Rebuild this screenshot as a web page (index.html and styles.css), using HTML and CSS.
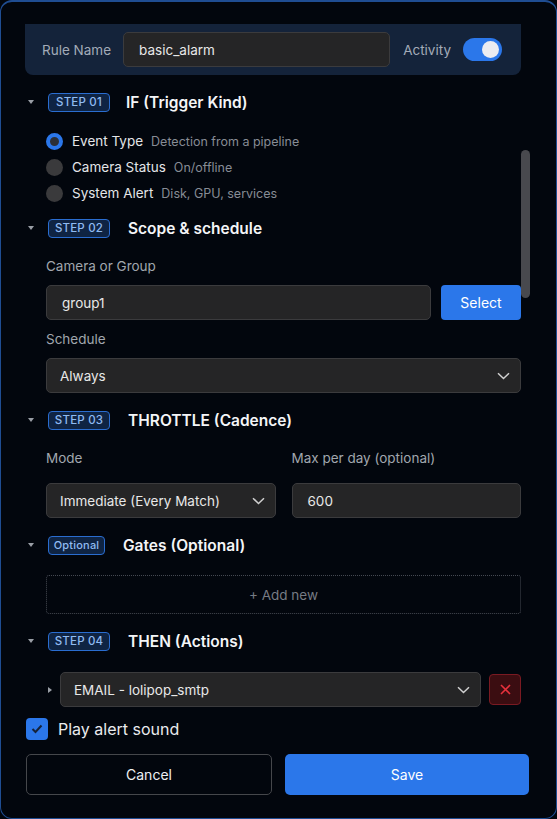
FILE: index.html
```html
<!DOCTYPE html>
<html lang="en">
<head>
<meta charset="UTF-8">
<title>Alarm Rule</title>
<link rel="stylesheet" href="styles.css">
</head>
<body>
  <div class="modal">
    <!-- scrollbar thumb drawn over the form -->
    <div class="scroll-thumb"></div>

    <div class="form">
      <!-- Rule name bar -->
      <div class="rule-bar">
        <span class="bar-label">Rule Name</span>
        <div class="input grow">basic_alarm</div>
        <span class="bar-label act">Activity</span>
        <div class="toggle"><span class="knob"></span></div>
      </div>

      <!-- Step 01 -->
      <div class="step-head first">
        <span class="caret"><svg width="6" height="5" viewBox="0 0 6 5"><path d="M0 0H6L3 4Z" fill="#9a9ea6"/></svg></span>
        <span class="badge">STEP 01</span>
        <span class="step-title">IF (Trigger Kind)</span>
      </div>
      <div class="radios">
        <div class="radio-row"><span class="radio on"></span><span class="r-label">Event Type</span><span class="r-desc">Detection from a pipeline</span></div>
        <div class="radio-row"><span class="radio"></span><span class="r-label">Camera Status</span><span class="r-desc">On/offline</span></div>
        <div class="radio-row"><span class="radio"></span><span class="r-label">System Alert</span><span class="r-desc">Disk, GPU, services</span></div>
      </div>

      <!-- Step 02 -->
      <div class="step-head s2">
        <span class="caret"><svg width="6" height="5" viewBox="0 0 6 5"><path d="M0 0H6L3 4Z" fill="#9a9ea6"/></svg></span>
        <span class="badge">STEP 02</span>
        <span class="step-title t2">Scope &amp; schedule</span>
      </div>
      <div class="fields">
        <div class="f-label mt18">Camera or Group</div>
        <div class="row mt9">
          <div class="input grow">group1</div>
          <button class="btn-select">Select</button>
        </div>
        <div class="f-label mt9">Schedule</div>
        <div class="select mt9">
          <span>Always</span>
          <svg width="13" height="8" viewBox="0 0 13 8"><path d="M1 1.2L6.5 6.5L12 1.2" fill="none" stroke="#d0d0d0" stroke-width="1.5"/></svg>
        </div>
      </div>

      <!-- Step 03 -->
      <div class="step-head">
        <span class="caret"><svg width="6" height="5" viewBox="0 0 6 5"><path d="M0 0H6L3 4Z" fill="#9a9ea6"/></svg></span>
        <span class="badge">STEP 03</span>
        <span class="step-title t2">THROTTLE (Cadence)</span>
      </div>
      <div class="fields two">
        <div class="col">
          <div class="f-label mt18">Mode</div>
          <div class="select mt15">
            <span>Immediate (Every Match)</span>
            <svg width="13" height="8" viewBox="0 0 13 8"><path d="M1 1.2L6.5 6.5L12 1.2" fill="none" stroke="#d0d0d0" stroke-width="1.5"/></svg>
          </div>
        </div>
        <div class="col">
          <div class="f-label mt18">Max per day (optional)</div>
          <div class="input mt15">600</div>
        </div>
      </div>

      <!-- Gates -->
      <div class="step-head">
        <span class="caret"><svg width="6" height="5" viewBox="0 0 6 5"><path d="M0 0H6L3 4Z" fill="#9a9ea6"/></svg></span>
        <span class="badge opt">Optional</span>
        <span class="step-title t2">Gates (Optional)</span>
      </div>
      <div class="fields">
        <div class="add-new">+ Add new</div>
      </div>

      <!-- Step 04 -->
      <div class="step-head">
        <span class="caret"><svg width="6" height="5" viewBox="0 0 6 5"><path d="M0 0H6L3 4Z" fill="#9a9ea6"/></svg></span>
        <span class="badge">STEP 04</span>
        <span class="step-title t2">THEN (Actions)</span>
      </div>
      <div class="fields">
        <div class="action-row">
          <span class="a-caret"><svg width="5" height="6" viewBox="0 0 5 6"><path d="M0 0V6L4 3Z" fill="#9a9ea6"/></svg></span>
          <div class="select grow">
            <span>EMAIL - lolipop_smtp</span>
            <svg width="13" height="8" viewBox="0 0 13 8"><path d="M1 1.2L6.5 6.5L12 1.2" fill="none" stroke="#d0d0d0" stroke-width="1.5"/></svg>
          </div>
          <button class="btn-del"><svg width="11" height="11" viewBox="0 0 11 11"><path d="M1 1L10 10M10 1L1 10" stroke="#e8313c" stroke-width="1.6"/></svg></button>
        </div>
      </div>
    </div>

    <!-- Footer -->
    <label class="check-row">
      <span class="checkbox"><svg width="12" height="10" viewBox="0 0 12 10"><path d="M1.5 5L4.5 8L10.5 1.5" fill="none" stroke="#16233a" stroke-width="2"/></svg></span>
      <span>Play alert sound</span>
    </label>
    <div class="actions">
      <button class="btn btn-cancel">Cancel</button>
      <button class="btn btn-save">Save</button>
    </div>
  </div>
</body>
</html>
```

FILE: styles.css
```css
html,body{margin:0;padding:0;background:#02060d;}
body{
  font-family:Inter,'Noto Sans',sans-serif;
  color:#e6e7ea;
  width:557px;height:819px;
}
*{box-sizing:border-box;}
button{font-family:inherit;cursor:pointer;}

.modal{
  position:relative;
  width:557px;height:819px;
  border:1px solid #1f4d92;
  border-top:2px solid #1f4d92;
  border-radius:12px;
  background:#02060d;
  padding:22px 27px 0 24px;
  display:flex;flex-direction:column;
}
.scroll-thumb{
  position:absolute;
  left:520px;top:148px;
  width:9px;height:148px;
  border-radius:5px;
  background:#48494e;
}
.form{padding-right:8px;}

/* rule name bar */
.rule-bar{
  height:51px;
  background:#14233a;
  border-radius:0 0 8px 8px;
  display:flex;align-items:center;
  padding:0 19px 0 17px;
}
.bar-label{font-size:13.5px;color:#a3abb8;margin-right:12px;white-space:nowrap;}
.bar-label.act{margin-left:13px;margin-right:12px;}
.grow{flex:1;}
.toggle{
  width:39px;height:23px;border-radius:12px;
  background:#2b77ea;position:relative;
}
.knob{
  position:absolute;right:3px;top:3px;
  width:17px;height:17px;border-radius:50%;
  background:#ececf1;
}

/* inputs */
.input,.select{
  height:35px;
  background:#252526;
  border:1px solid #3b3b3d;
  border-radius:5px;
  font-size:13.5px;color:#e8e8e8;
  display:flex;align-items:center;
}
.input{padding-left:15px;}
.select{padding:0 10px 0 13px;justify-content:space-between;}
.select svg{flex:none;}

/* step headings */
.step-head{
  display:flex;align-items:center;
  height:20px;margin-top:17px;
}
.step-head.first{margin-top:17px;}
.step-head.s2{margin-top:12px;}
.caret{width:23px;padding-left:3px;display:flex;align-items:center;}
.badge{
  width:62px;height:19px;
  border:1px solid #2a6dd0;border-radius:4px;
  background:#0f2443;
  color:#8fbbf2;
  font-size:11.5px;font-weight:500;letter-spacing:.2px;
  display:flex;align-items:center;justify-content:center;
}
.badge.opt{width:57px;font-size:11px;}
.step-title{margin-left:16px;font-size:15.5px;font-weight:600;color:#f4f5f7;}
.step-title.t2{margin-left:18px;}

/* radios */
.radios{padding:16px 0 0 21px;}
.radio-row{height:26px;display:flex;align-items:center;}
.radio{
  width:17px;height:17px;border-radius:50%;
  background:#3a3a3c;margin-right:9px;flex:none;
}
.radio.on{background:#2c2f36;border:4px solid #2b77ea;}
.r-label{font-size:13.5px;color:#e4e5e8;margin-right:8px;}
.r-desc{font-size:12.5px;color:#878c95;}

/* field blocks */
.fields{padding-left:21px;}
.fields.two{display:flex;gap:16px;}
.col{flex:1;}
.f-label{font-size:13.5px;color:#a1a6ae;line-height:20px;}
.mt18{margin-top:18px;}
.mt9{margin-top:9px;}
.mt15{margin-top:15px;}
.row{display:flex;gap:10px;}
.btn-select{
  width:80px;height:35px;border:none;border-radius:4px;
  background:#2b77ea;color:#fff;font-size:14px;
}
.add-new{
  margin-top:20px;height:39px;
  border:1px dotted #454952;border-radius:3px;
  display:flex;align-items:center;justify-content:center;
  font-size:13.5px;color:#767b84;
}
.action-row{
  margin-top:21px;
  display:flex;align-items:center;
}
.a-caret{width:14px;padding-left:2px;display:flex;align-items:center;}
.action-row .select{height:35px;}
.btn-del{
  margin-left:8px;width:32px;height:31px;
  background:#3b0d11;border:1px solid #7a1a22;border-radius:4px;
  display:flex;align-items:center;justify-content:center;padding:0;
}

/* footer */
.check-row{
  margin-top:11px;margin-left:1px;
  display:flex;align-items:center;
  font-size:16px;color:#eaebee;
}
.checkbox{
  width:22px;height:22px;border-radius:4px;
  background:#2b77ea;margin-right:10px;
  display:flex;align-items:center;justify-content:center;
}
.actions{
  margin-top:14px;margin-left:1px;
  display:flex;gap:13px;
}
.btn{
  flex:1;height:41px;border-radius:5px;font-size:14px;color:#eef0f3;
}
.btn-cancel{background:transparent;border:1px solid #45474b;}
.btn-save{background:#2b77ea;border:none;color:#fff;}
```
